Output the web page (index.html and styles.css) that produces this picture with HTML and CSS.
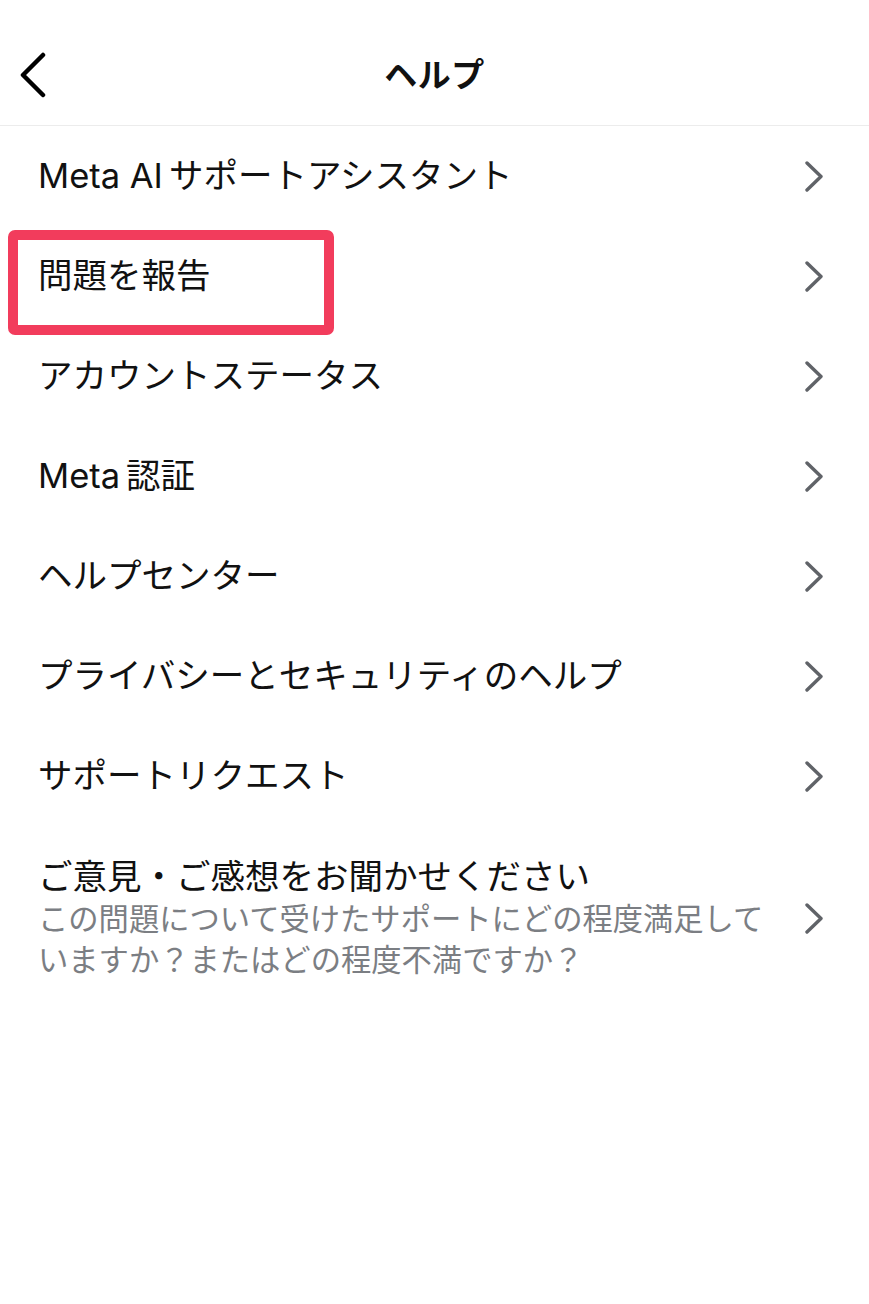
FILE: index.html
```html
<!DOCTYPE html>
<html lang="ja">
<head>
<meta charset="utf-8">
<link rel="stylesheet" href="styles.css">
</head>
<body>
<div class="screen">
  <header class="header">
    <div class="back">
      <svg width="30" height="46" viewBox="0 0 30 46"><path d="M26 3 L6 23 L26 43" fill="none" stroke="#000" stroke-width="4.5" stroke-linecap="round" stroke-linejoin="round"/></svg>
    </div>
    <h1 class="title">ヘルプ</h1>
  </header>
  <ul class="list">
    <li class="row"><span class="label"><span class="latin">Meta AI</span>サポートアシスタント</span><span class="chev"></span></li>
    <li class="row highlighted"><span class="label">問題を報告</span><span class="chev"></span><span class="mark"></span></li>
    <li class="row"><span class="label">アカウントステータス</span><span class="chev"></span></li>
    <li class="row"><span class="label"><span class="latin">Meta</span>認証</span><span class="chev"></span></li>
    <li class="row"><span class="label">ヘルプセンター</span><span class="chev"></span></li>
    <li class="row"><span class="label">プライバシーとセキュリティのヘルプ</span><span class="chev"></span></li>
    <li class="row"><span class="label">サポートリクエスト</span><span class="chev"></span></li>
    <li class="row tall">
      <div class="texts">
        <span class="label">ご意見・ご感想をお聞かせください</span>
        <span class="sub">この問題について受けたサポートにどの程度満足していますか？またはどの程度不満ですか？</span>
      </div>
      <span class="chev"></span>
    </li>
  </ul>
</div>
</body>
</html>
```
FILE: styles.css
```css
* { box-sizing: border-box; margin: 0; padding: 0; }
body {
  background: #fff;
  font-family: Inter, "Noto Sans CJK JP", "Noto Sans", sans-serif;
  color: #111;
}
.screen { width: 869px; min-height: 1304px; background: #fff; }
.header {
  height: 126px;
  border-bottom: 1px solid #ececec;
  position: relative;
  display: flex;
  align-items: center;
  justify-content: center;
}
.back {
  position: absolute;
  left: 17px;
  top: 52px;
  width: 30px;
  height: 46px;
  display: flex;
}
.title {
  font-family: "Noto Sans CJK JP", sans-serif;
  font-size: 33px;
  font-weight: 700;
  line-height: 1;
  margin-top: 22px;
  letter-spacing: 0.5px;
}
.list { list-style: none; }
.row {
  position: relative;
  height: 100px;
  display: flex;
  align-items: center;
  justify-content: space-between;
  padding: 0 46px 0 38px;
}
.label {
  font-size: 34.5px;
  line-height: 44px;
  color: #111;
}
.latin { margin-right: 6px; }
.chev {
  width: 18px;
  height: 31px;
  flex: none;
  background: no-repeat center / 18px 31px url("data:image/svg+xml,%3Csvg xmlns='http://www.w3.org/2000/svg' width='18' height='31' viewBox='0 0 18 31'%3E%3Cpath d='M2 2 L16 15.5 L2 29' fill='none' stroke='%23606368' stroke-width='3.4' stroke-linecap='round' stroke-linejoin='round'/%3E%3C/svg%3E");
}
.mark {
  position: absolute;
  left: 8px;
  top: 4px;
  width: 326px;
  height: 105px;
  border: 10px solid #f23c5c;
  border-radius: 7px;
}
.row.tall {
  height: auto;
  padding-top: 29px;
  align-items: center;
}
.texts {
  display: flex;
  flex-direction: column;
  width: 735px;
}
.sub {
  font-size: 30.3px;
  line-height: 41px;
  color: #7b7e83;
}
```
